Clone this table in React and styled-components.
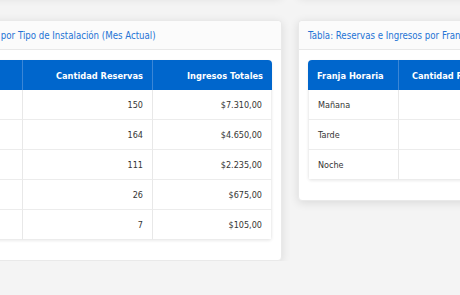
import React from "react";
import styled, { createGlobalStyle } from "styled-components";

const Global = createGlobalStyle`
  html, body { margin: 0; padding: 0; background: #f4f4f4; overflow: hidden; }
  body { font-family: "DejaVu Sans Condensed", "DejaVu Sans", sans-serif; font-size: 9px; color: #353535; }
`;

const Grid = styled.div`
  display: grid;
  grid-template-columns: ${(p) => p.$cols};
  column-gap: 16px;
  row-gap: 24px;
  margin-left: ${(p) => p.$shift}px;
  margin-top: -104px;
  align-items: start;
`;

const Card = styled.section`
  background: #fff;
  border: 1px solid #e9e9e9;
  border-radius: 4px;
  box-shadow: 0 2px 10px rgba(0, 0, 0, 0.11);
  box-sizing: border-box;
  height: ${(p) => (p.$h ? `${p.$h}px` : "auto")};
`;

const CardHeader = styled.div`
  height: 29px;
  box-sizing: border-box;
  padding: 0 9px;
  display: flex;
  align-items: center;
  background: #fbfbfb;
  border-bottom: 1px solid #e8e8e8;
  border-radius: 4px 4px 0 0;
  color: #2573d5;
  font-size: 9.6px;
  white-space: nowrap;
  overflow: hidden;
`;

const CardBody = styled.div`
  padding: 10px 9px 20px;
`;

const Table = styled.table`
  width: 100%;
  border-collapse: separate;
  border-spacing: 0;
  table-layout: fixed;
  border-radius: 4px;
  overflow: hidden;
  box-shadow: 0 1px 3px rgba(0, 0, 0, 0.08);
`;

const Th = styled.th`
  background: #0066cc;
  color: #fff;
  font-weight: bold;
  font-size: 9.2px;
  height: 30px;
  padding: 0 9px;
  text-align: ${(p) => (p.$num ? "right" : "left")};
  border-left: ${(p) => (p.$first ? "none" : "1px solid #3b86d6")};
  white-space: nowrap;
  overflow: hidden;
`;

const Td = styled.td`
  height: 29px;
  padding: 0 9px;
  text-align: ${(p) => (p.$num ? "right" : "left")};
  border-bottom: 1px solid #ececec;
  border-left: ${(p) => (p.$first ? "1px solid #f0f0f0" : "1px solid #e8e8e8")};
  border-right: ${(p) => (p.$last ? "1px solid #f0f0f0" : "none")};
  color: #353535;
  white-space: nowrap;
  overflow: hidden;
`;

const tipo = [
  ["Cancha de Fútbol 5", 150, "$7.310,00"],
  ["Cancha de Pádel", 164, "$4.650,00"],
  ["Cancha de Tenis", 111, "$2.235,00"],
  ["Piscina", 26, "$675,00"],
  ["Gimnasio", 7, "$105,00"],
];

const franjas = [
  ["Mañana", 210, "$6.480,00"],
  ["Tarde", 168, "$5.320,00"],
  ["Noche", 80, "$3.175,00"],
];

function DataTable({ first, firstWidth, midWidth, lastWidth, rows }) {
  return (
    <Table>
      <colgroup>
        <col style={firstWidth ? { width: firstWidth } : undefined} />
        <col style={{ width: midWidth }} />
        <col style={lastWidth ? { width: lastWidth } : undefined} />
      </colgroup>
      <thead>
        <tr>
          <Th $first>{first}</Th>
          <Th $num>Cantidad Reservas</Th>
          <Th $num>Ingresos Totales</Th>
        </tr>
      </thead>
      <tbody>
        {rows.map(([n, c, i]) => (
          <tr key={n}>
            <Td $first>{n}</Td>
            <Td $num>{c}</Td>
            <Td $num $last>{i}</Td>
          </tr>
        ))}
      </tbody>
    </Table>
  );
}

export default function App() {
  return (
    <>
      <Global />
      <Grid $cols="408px 470px" $shift={-126}>
        <Card $h={100} />
        <Card $h={100} />
        <Card>
          <CardHeader>Tabla: Reservas e Ingresos por Tipo de Instalación (Mes Actual)</CardHeader>
          <CardBody>
            <DataTable first="Tipo de Instalación" midWidth={130} lastWidth={120} rows={tipo} />
          </CardBody>
        </Card>
        <Card>
          <CardHeader>Tabla: Reservas e Ingresos por Franja Horaria (Mes Actual)</CardHeader>
          <CardBody>
            <DataTable first="Franja Horaria" firstWidth={90} midWidth={110} rows={franjas} />
          </CardBody>
        </Card>
      </Grid>
    </>
  );
}
